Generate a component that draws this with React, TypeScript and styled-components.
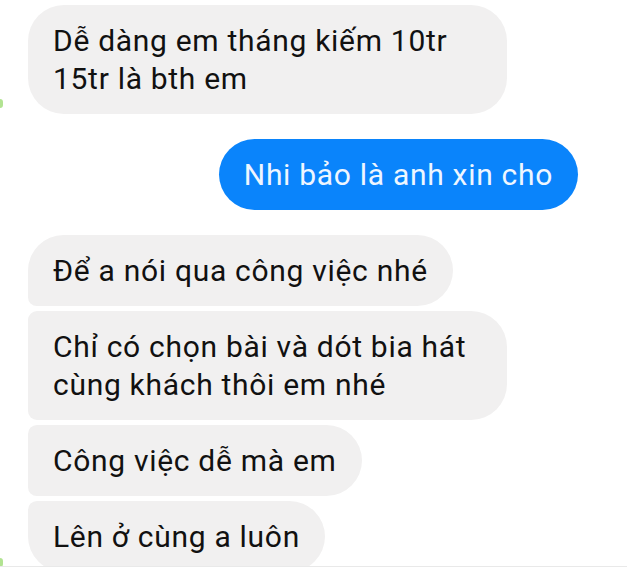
import React from "react";
import styled, { createGlobalStyle } from "styled-components";

const Global = createGlobalStyle`
  html, body { margin: 0; padding: 0; background: #ffffff; }
  body { font-family: Roboto, "Noto Sans", "Liberation Sans", sans-serif; }
`;

const Screen = styled.div`
  position: relative;
  width: 627px;
  height: 566px;
  overflow: hidden;
  border-bottom: 1px solid #e9e9e9;
  background: #ffffff;
`;

const Thread = styled.div`
  display: flex;
  flex-direction: column;
  padding: 5px 49px 0 28px;
`;

const Group = styled.div<{ $mine?: boolean }>`
  display: flex;
  flex-direction: column;
  align-items: ${(p) => (p.$mine ? "flex-end" : "flex-start")};
  gap: 5px;
  margin-bottom: 25px;
`;

type Pos = "single" | "first" | "middle" | "last";

const radius = (pos: Pos, mine?: boolean) => {
  const big = "36px";
  const small = "9px";
  if (mine || pos === "single") return `${big}`;
  if (pos === "first") return `${big} ${big} ${big} ${small}`;
  if (pos === "middle") return `${small} ${big} ${big} ${small}`;
  return `${small} ${big} ${big} ${big}`;
};

const Bubble = styled.div<{ $mine?: boolean; $pos: Pos }>`
  box-sizing: border-box;
  max-width: 479px;
  padding: 17px 25px 16px 25px;
  border-radius: ${(p) => radius(p.$pos, p.$mine)};
  background: ${(p) => (p.$mine ? "#0a84fb" : "#f1f0f0")};
  color: ${(p) => (p.$mine ? "#eef6ff" : "#111111")};
  font-size: 30px;
  letter-spacing: 0.7px;
  line-height: 38px;
  font-weight: 400;
`;

const ActiveDot = styled.div<{ $top: number }>`
  position: absolute;
  left: -3px;
  top: ${(p) => p.$top}px;
  width: 6px;
  height: 9px;
  border-radius: 3px;
  background: #7fd24a;
  opacity: 0.6;
  filter: blur(0.6px);
`;

export default function App() {
  return (
    <>
      <Global />
      <Screen>
        <Thread>
          <Group>
            <Bubble $pos="single">Dễ dàng em tháng kiếm 10tr 15tr là bth em</Bubble>
          </Group>
          <Group $mine>
            <Bubble $mine $pos="single">Nhi bảo là anh xin cho</Bubble>
          </Group>
          <Group>
            <Bubble $pos="first">Để a nói qua công việc nhé</Bubble>
            <Bubble $pos="middle">Chỉ có chọn bài và dót bia hát cùng khách thôi em nhé</Bubble>
            <Bubble $pos="middle">Công việc dễ mà em</Bubble>
            <Bubble $pos="last">Lên ở cùng a luôn</Bubble>
          </Group>
        </Thread>
        <ActiveDot $top={99} />
        <ActiveDot $top={558} />
      </Screen>
    </>
  );
}
